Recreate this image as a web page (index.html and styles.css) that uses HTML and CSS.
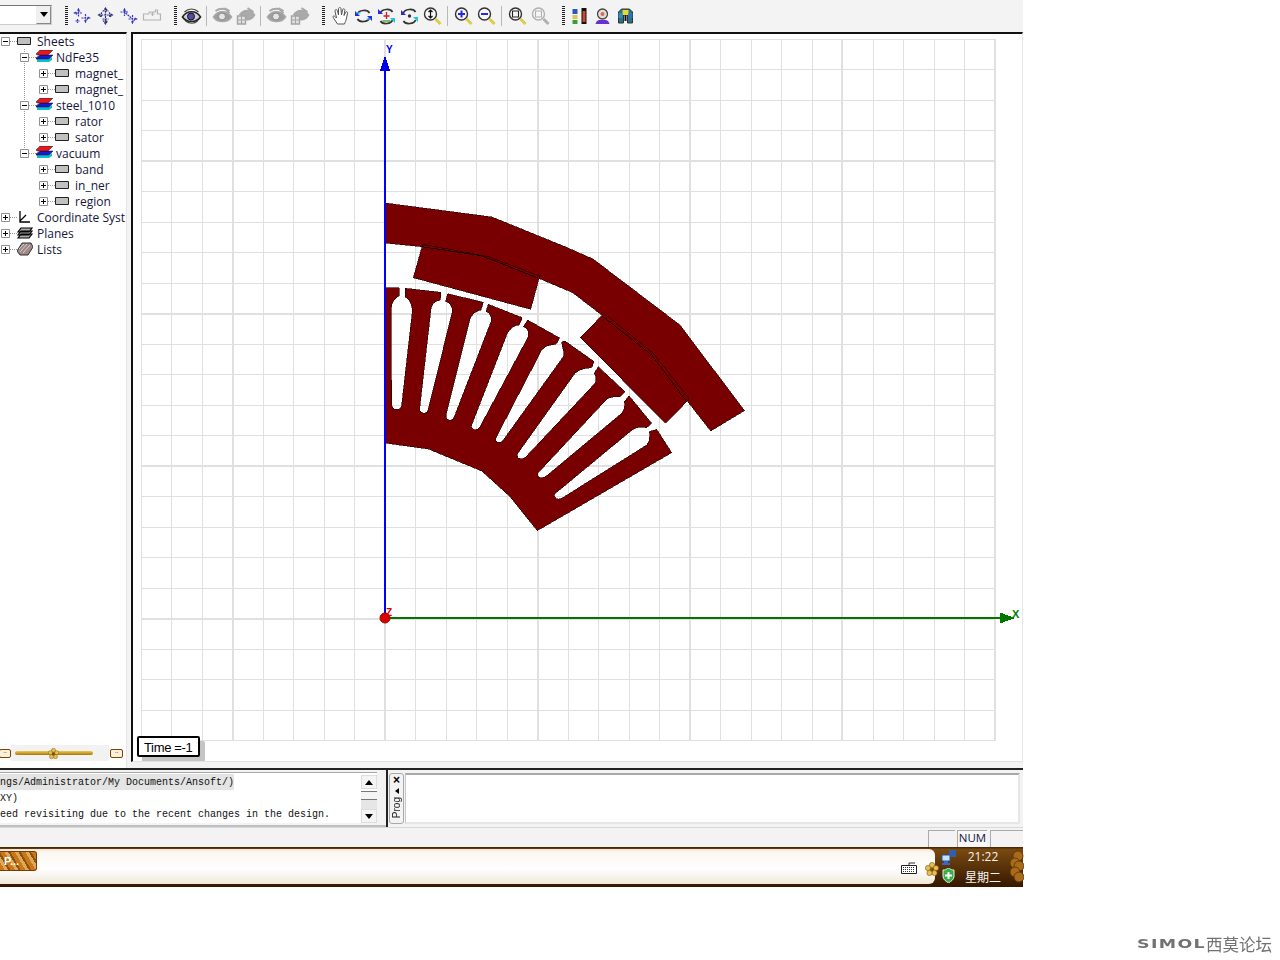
FILE: index.html
```html
<!DOCTYPE html>
<html lang="en">
<head>
<meta charset="utf-8">
<title>Maxwell</title>
<link rel="stylesheet" href="styles.css">
</head>
<body>
<svg class="defs" width="0" height="0" aria-hidden="true">
  <defs>
    <symbol id="sel1" viewBox="0 0 20 20"><path d="M6 3v8M2 7h8M13 8v8M9 12h8M5 13v4M3 15h4M6 3l-1 2h2zM2 7l2-1v2zM17 12l-2-1v2zM13 16l-1-2h2z" fill="none" stroke="#3434c8" stroke-width="1.2" stroke-dasharray="2 .7"/></symbol>
    <symbol id="sel2" viewBox="0 0 20 20"><path d="M10 2v16M3 9h14M7 5h6M7 13h6M10 2l-2 3h4zM10 18l-2-3h4zM3 9l3-2v4zM17 9l-3-2v4z" fill="none" stroke="#2c2c78" stroke-width="1.2" stroke-dasharray="2 .7"/></symbol>
    <symbol id="sel3" viewBox="0 0 20 20"><path d="M6 3v7M2 6h8M14 9v8M10 13h8M7 7l7 6M6 3l-1 2h2zM18 13l-2-1v2zM14 17l-1-2h2z" fill="none" stroke="#3434c8" stroke-width="1.2" stroke-dasharray="2 .7"/></symbol>
    <symbol id="sel4" viewBox="0 0 20 20"><path d="M2 8h5l1-2h6v-2h2v4h3v6H2zM11 6v4M9 8h4" fill="#f3f3f3" stroke="#b4b4b4" stroke-width="1.2"/></symbol>
    <symbol id="eye" viewBox="0 0 20 20"><path d="M1 11c4-7 14-7 18 0-4 6-14 6-18 0z" fill="#d0d0d0" stroke="#222" stroke-width="1.6"/><path d="M3 6c4-4 10-4 14 0M4 15c4 3 9 3 12 0" fill="none" stroke="#444" stroke-width="1.2"/><circle cx="9.5" cy="10.5" r="3.5" fill="#4e4ea8" stroke="#111"/></symbol>
    <symbol id="eyeg" viewBox="0 0 20 20"><path d="M1 11c4-7 14-7 18 0-4 6-14 6-18 0z" fill="#9c9c9c" stroke="#a8a8a8" stroke-width="1.6"/><path d="M3 5c4-3 10-3 14 0M12 2l5 5" fill="none" stroke="#a8a8a8" stroke-width="2"/><circle cx="9.5" cy="10.5" r="3.5" fill="#e4e4e4" stroke="#8c8c8c"/></symbol>
    <symbol id="eyeh" viewBox="0 0 20 20"><path d="M4 9c4-6 11-6 15 0-2 4-5 5-8 5" fill="#aaa" stroke="#a8a8a8" stroke-width="1.6"/><path d="M12 2l6 4" fill="none" stroke="#a8a8a8" stroke-width="2"/><path d="M2 10h8v8H2z" fill="#e0e0e0" stroke="#a4a4a4" stroke-width="1.4"/><path d="M2 14h8M6 10v8" stroke="#a4a4a4"/></symbol>
    <symbol id="hand" viewBox="0 0 20 20"><path d="M7 18 3 12c-1-2 0-3 2-1l1 1L4.500 5c0-2 2-2 2.500 0l1 4V3c0-2 2.500-2 2.500 0l.5 6 1-5c.5-2 2.500-1.500 2.300.5L13.500 9.500l1.500-3c1-1.500 2.500-.5 2 1L16 12c-.5 3-1.500 4-2 6z" fill="#fff" stroke="#555" stroke-width="1"/></symbol>
    <symbol id="rot1" viewBox="0 0 20 20"><path d="M4 8c1-4 10-5 12-1M16 12c-1 4-10 5-12 1" fill="none" stroke="#333" stroke-width="1.700"/><path d="M1.500 5v5h5z" fill="#2828e8"/><path d="M3 7h4" stroke="#18d8f0" stroke-width="1.200"/><path d="M18.500 15v-5h-5z" fill="#2828e8"/><path d="M13 13h4" stroke="#18d8f0" stroke-width="1.200"/></symbol>
    <symbol id="rot2" viewBox="0 0 20 20"><path d="M4 7c1-4 10-5 12-1M16 14c-1 4-10 5-12 1" fill="none" stroke="#333" stroke-width="1.700"/><path d="M1.500 3v5h5z" fill="#2828e8"/><path d="M18.500 17v-5h-5z" fill="#18c8e0"/><path d="M10 6v7M7 10h6" stroke="#e01818" stroke-width="1.300"/><path d="M6 15h8" stroke="#18a018" stroke-width="1.200"/></symbol>
    <symbol id="rot3" viewBox="0 0 20 20"><path d="M4 7c1-4 10-5 12-1M16 14c-1 4-10 5-12 1" fill="none" stroke="#333" stroke-width="1.700"/><path d="M1.500 4v5h5z" fill="#2828e8"/><path d="M18.500 16v-5h-5z" fill="#18c8e0"/><circle cx="10" cy="10" r="1.700" fill="#333"/></symbol>
    <symbol id="zfit" viewBox="0 0 20 20"><circle cx="8" cy="8" r="6" fill="#f6f6f6" stroke="#333" stroke-width="1.400"/><path d="M8 4v8M6 6l2-2 2 2M6 10l2 2 2-2" fill="none" stroke="#111" stroke-width="1.200"/><path d="M13 13l5 5" stroke="#d8d040" stroke-width="3"/></symbol>
    <symbol id="zin" viewBox="0 0 20 20"><circle cx="8" cy="8" r="6" fill="#f6f6f6" stroke="#333" stroke-width="1.400"/><path d="M8 4.500v7M4.500 8h7" stroke="#2828e8" stroke-width="2"/><path d="M13 13l5 5" stroke="#d8d040" stroke-width="3"/></symbol>
    <symbol id="zout" viewBox="0 0 20 20"><circle cx="8" cy="8" r="6" fill="#f6f6f6" stroke="#333" stroke-width="1.400"/><path d="M4.500 8h7" stroke="#2828e8" stroke-width="2"/><path d="M13 13l5 5" stroke="#d8d040" stroke-width="3"/></symbol>
    <symbol id="zbox" viewBox="0 0 20 20"><circle cx="8" cy="8" r="6" fill="#f6f6f6" stroke="#333" stroke-width="1.400"/><path d="M5 5h6v6H5z" fill="none" stroke="#222" stroke-width="1.100"/><path d="M13 13l5 5" stroke="#d8d040" stroke-width="3"/></symbol>
    <symbol id="zboxg" viewBox="0 0 20 20"><circle cx="8" cy="8" r="6" fill="#f6f6f6" stroke="#b0b0b0" stroke-width="1.400"/><path d="M5 5h6v6H5z" fill="none" stroke="#b0b0b0" stroke-width="1.100"/><path d="M13 13l5 5" stroke="#b0b0b0" stroke-width="3"/></symbol>
    <symbol id="tbars" viewBox="0 0 20 20"><path d="M12 2h5v16h-5z" fill="#111"/><path d="M13 5h3v11h-3z" fill="#c84830"/><path d="M3 3h5v5H3z" fill="#2858b8"/><path d="M3 9h5v4H3z" fill="#d8c850"/><path d="M3 14h5v4H3z" fill="#38a038"/></symbol>
    <symbol id="tuser" viewBox="0 0 20 20"><circle cx="10" cy="8" r="5" fill="#e8dcd8" stroke="#444" stroke-width="1.300"/><circle cx="10" cy="8" r="2" fill="#d07058"/><path d="M3 18c1-3 2-4 4-4h6c2 0 3 1 4 4z" fill="#6830d0"/></symbol>
    <symbol id="tcol" viewBox="0 0 20 20"><path d="M6 3h8l3 3v11h-5V9H8v8H3V6z" fill="#207880" stroke="#333"/><path d="M7 4h6v5H7z" fill="#e8d830"/><path d="M3 7h4v5H3z" fill="#3888c8"/><path d="M13 7h4v5h-4z" fill="#3070c0"/><path d="M9 9h2v6H9z" fill="#111"/></symbol>

    <symbol id="plus" viewBox="0 0 9 9"><path d="M.5.5h8v8h-8z" fill="#fff" stroke="#919191"/><path d="M2 4.500h5M4.500 2v5" stroke="#000"/></symbol>
    <symbol id="minus" viewBox="0 0 9 9"><path d="M.5.5h8v8h-8z" fill="#fff" stroke="#919191"/><path d="M2 4.500h5" stroke="#000"/></symbol>
    <symbol id="sheet" viewBox="0 0 14 8"><path d="M.5.5h13v7H.5z" fill="#c0c0c0" stroke="#222"/></symbol>
    <symbol id="stack" viewBox="0 0 17 12"><path d="M1 9h12l3-2v3l-3 2H1z" fill="#10c0c0"/><path d="M0 8l4-3h13l-4 4H0z" fill="#1818d8" stroke="#111" stroke-width=".5"/><path d="M0 4l4-4h13l-4 4-1 1H1z" fill="#e81818" stroke="#111" stroke-width=".5"/></symbol>
    <symbol id="axes" viewBox="0 0 14 14"><path d="M3 1v11h10M3 11l6-6" fill="none" stroke="#000" stroke-width="1.300"/></symbol>
    <symbol id="planes" viewBox="0 0 16 12"><path d="M4 1h11l-3 4H1zM4 4h11l-3 4H1zM4 7h11l-3 4H1z" fill="#aaa" stroke="#000" stroke-width="1.200"/></symbol>
    <symbol id="lists" viewBox="0 0 16 14"><path d="M5 1h9l2 4-5 8H3L0 9z" fill="#a08888" stroke="#333"/><path d="M3 10l7-8M6 11l7-8M2 7l5-5" stroke="#e0e0e0" stroke-width=".8"/></symbol>
    <symbol id="keyb" viewBox="0 0 18 14"><path d="M9 4V2h6" fill="none" stroke="#333"/><path d="M1.500 4.500h15v8h-15z" fill="#fff" stroke="#222"/><path d="M3 6.500h12M3 8.500h12M3 10.500h12" stroke="#333" stroke-dasharray="1 1"/></symbol>
    <symbol id="flower" viewBox="0 0 14 14"><g fill="#e8c050" stroke="#805010" stroke-width=".6"><circle cx="7" cy="3" r="2.600"/><circle cx="11" cy="6" r="2.600"/><circle cx="9.500" cy="11" r="2.600"/><circle cx="4.500" cy="11" r="2.600"/><circle cx="3" cy="6" r="2.600"/></g><circle cx="7" cy="7.500" r="2" fill="#805010"/></symbol>
    <symbol id="decoflower" viewBox="0 0 14 34" preserveAspectRatio="none"><g fill="#a86c18" stroke="#5a3008" stroke-width=".8"><circle cx="8" cy="6" r="5"/><circle cx="5" cy="13" r="5"/><circle cx="9" cy="16" r="5"/><circle cx="5" cy="22" r="5"/><circle cx="9" cy="27" r="5"/></g></symbol>
    <symbol id="net" viewBox="0 0 15 15"><path d="M8 0h7v7H8z" fill="#3060a8"/><path d="M1 5h8v6H1z" fill="#c8e0f8" stroke="#2850a0"/><path d="M3 11h4v2h2v2H1v-2h2z" fill="#3868c0"/></symbol>
    <symbol id="shield" viewBox="0 0 13 15"><path d="M1 2c4 0 4-2 5.500-2S8 2 12 2v6c0 4-3 5-5.500 7C4 13 1 12 1 8z" fill="#38b048" stroke="#e8f0e0"/><path d="M6.500 4v7M3 7.500h7" stroke="#fff" stroke-width="2"/></symbol>
  </defs>
</svg>

<div class="app">
  <header class="toolbar">
    <div class="combo"><span class="combo-btn"><i class="caret"></i></span></div>
    <i class="grip g1"></i>
    <svg class="tb"><use href="#sel1"/></svg>
    <svg class="tb"><use href="#sel2"/></svg>
    <svg class="tb"><use href="#sel3"/></svg>
    <svg class="tb"><use href="#sel4"/></svg>
    <i class="grip g2"></i>
    <svg class="tb"><use href="#eye"/></svg>
    <i class="sep"></i>
    <svg class="tb"><use href="#eyeg"/></svg>
    <svg class="tb"><use href="#eyeh"/></svg>
    <i class="sep"></i>
    <svg class="tb"><use href="#eyeg"/></svg>
    <svg class="tb"><use href="#eyeh"/></svg>
    <i class="grip g3"></i>
    <svg class="tb"><use href="#hand"/></svg>
    <svg class="tb"><use href="#rot1"/></svg>
    <svg class="tb"><use href="#rot2"/></svg>
    <svg class="tb"><use href="#rot3"/></svg>
    <svg class="tb"><use href="#zfit"/></svg>
    <i class="sep"></i>
    <svg class="tb"><use href="#zin"/></svg>
    <svg class="tb"><use href="#zout"/></svg>
    <i class="sep"></i>
    <svg class="tb"><use href="#zbox"/></svg>
    <svg class="tb"><use href="#zboxg"/></svg>
    <i class="grip g4"></i>
    <svg class="tb"><use href="#tbars"/></svg>
    <svg class="tb"><use href="#tuser"/></svg>
    <svg class="tb"><use href="#tcol"/></svg>
  </header>

  <main class="workspace">
    <aside class="tree-panel">
      <div class="tree">
        <div class="row l0"><svg class="box"><use href="#minus"/></svg><i class="stub"></i><svg class="ic ic-sheet"><use href="#sheet"/></svg><span>Sheets</span></div>
        <div class="guide">
          <div class="row l1"><svg class="box"><use href="#minus"/></svg><i class="stub"></i><svg class="ic ic-stack"><use href="#stack"/></svg><span>NdFe35</span></div>
          <div class="row l2"><svg class="box"><use href="#plus"/></svg><i class="stub"></i><svg class="ic ic-sheet"><use href="#sheet"/></svg><span>magnet_</span></div>
          <div class="row l2"><svg class="box"><use href="#plus"/></svg><i class="stub"></i><svg class="ic ic-sheet"><use href="#sheet"/></svg><span>magnet_</span></div>
          <div class="row l1"><svg class="box"><use href="#minus"/></svg><i class="stub"></i><svg class="ic ic-stack"><use href="#stack"/></svg><span>steel_1010</span></div>
          <div class="row l2"><svg class="box"><use href="#plus"/></svg><i class="stub"></i><svg class="ic ic-sheet"><use href="#sheet"/></svg><span>rator</span></div>
          <div class="row l2"><svg class="box"><use href="#plus"/></svg><i class="stub"></i><svg class="ic ic-sheet"><use href="#sheet"/></svg><span>sator</span></div>
        </div>
        <div class="row l1 last"><svg class="box"><use href="#minus"/></svg><i class="stub"></i><svg class="ic ic-stack"><use href="#stack"/></svg><span>vacuum</span></div>
        <div class="row l2"><svg class="box"><use href="#plus"/></svg><i class="stub"></i><svg class="ic ic-sheet"><use href="#sheet"/></svg><span>band</span></div>
        <div class="row l2"><svg class="box"><use href="#plus"/></svg><i class="stub"></i><svg class="ic ic-sheet"><use href="#sheet"/></svg><span>in_ner</span></div>
        <div class="row l2"><svg class="box"><use href="#plus"/></svg><i class="stub"></i><svg class="ic ic-sheet"><use href="#sheet"/></svg><span>region</span></div>
        <div class="row l0"><svg class="box"><use href="#plus"/></svg><i class="stub"></i><svg class="ic ic-axes"><use href="#axes"/></svg><span>Coordinate Syst</span></div>
        <div class="row l0"><svg class="box"><use href="#plus"/></svg><i class="stub"></i><svg class="ic ic-planes"><use href="#planes"/></svg><span>Planes</span></div>
        <div class="row l0"><svg class="box"><use href="#plus"/></svg><i class="stub"></i><svg class="ic ic-lists"><use href="#lists"/></svg><span>Lists</span></div>
      </div>
      <div class="slider">
        <span class="sl-btn sl-left">··</span>
        <div class="sl-area"><span class="sl-track"><svg class="sl-thumb"><use href="#flower"/></svg></span></div>
        <span class="sl-btn">··</span>
      </div>
    </aside>
    <section class="view">
      <svg class="model" viewBox="133 34 888 728" width="888" height="728">
        <path class="grid" d="M141.500 39V740M171.500 39V740M202.500 39V740M263.500 39V740M293.500 39V740M324.500 39V740M354.500 39V740M415.500 39V740M446.500 39V740M476.500 39V740M507.500 39V740M568.500 39V740M598.500 39V740M629.500 39V740M659.500 39V740M720.500 39V740M751.500 39V740M781.500 39V740M812.500 39V740M873.500 39V740M903.500 39V740M934.500 39V740M964.500 39V740M141 39.500H995M141 69.500H995M141 100.500H995M141 130.500H995M141 191.500H995M141 222.500H995M141 252.500H995M141 283.500H995M141 344.500H995M141 374.500H995M141 405.500H995M141 435.500H995M141 496.500H995M141 527.500H995M141 557.500H995M141 588.500H995M141 649.500H995M141 679.500H995M141 710.500H995M141 740.500H995"/>
        <path class="grid grid-b" d="M233 39V741M385 39V741M538 39V741M690 39V741M842 39V741M995 39V741M141 161H996M141 314H996M141 466H996M141 619H996"/>

        <path class="part" d="M385 203L492 217 565 246.700 593 259 680 325 744.500 410.700 710.700 431 688 402 653 354 601.700 315 572.700 292.700 538 278 481.700 255.700 421.700 246.700 385 243Z"/>
        <path class="part" d="M422.700 244.300L488.300 256.700 539.700 276 530.700 309.300 413.300 277.700Z"/>
        <path class="part" d="M604 313.300L653.300 353.300 689.300 399 665.700 423.300 580.300 337.700Z"/>
        <path class="wire" d="M421.700 246.700L481.700 255.700 538.300 278.300M601.700 315.700L651.700 355 686.700 401.700"/>
        <path class="part" d="M385 287.700H399.300V296C395 298 391 302 391 311.700L391.700 405C392 411 401 411 401.700 405L412.300 311.700C412.500 304 409 299 405 296.700L405.300 288.300
          L441 292.300L440.300 300C434 301 431 305 430.700 311.700L419.700 408.300C419 414 427 415 428.300 409.300L452.300 311.700C452.500 306 450 303 445.700 301.700L447.700 293.700
          L483.300 302.300L481 310C475 311 471 315 469.300 321.700L446 415C445 421 453 422 454.300 416.700L491 321.700C492 316 490 313 486 311.700L488.300 304.300
          L522.300 317.700L519.300 325C514 325 509 329 506.700 335L471.700 425C470 431 478 431 480 426.700L528.300 336.700C529 331 527 328 523.300 326.700L527.700 320
          L559.700 338L556 344.300C551 345 546 345 541.700 350L495.700 438.300C495 444 502 443 503.300 440L563.300 356.700C565 351 562 348 561.700 341.700L565 341
          L594.300 361.700L591.700 367.300C587 369 583 367 575 373.300L517.300 454C516 460 523 460 526 456.700L595 383.300C597 379 595 374 594.300 373.300L598.300 366.700
          L625 391.700L620 396.700C615 397 611 396 606 400L537.700 473.300C537 479 543 479 546.700 475.700L621.700 413.300C625 409 625 405 624.300 401.700L629 395.700
          L651.700 423.300L646.700 427.700C641 427 637 426 630 431.700L554.300 494.300C554 500 560 500 563.300 497.300L646.700 445C650 441 650 436 649.300 431.700L656.700 429.300
          L671.700 452.700L537.300 530.700L510 496.700L481.700 471L428.300 449L385 443Z"/>

        <path class="axis-b" d="M385 62V618"/>
        <path class="fill-b" d="M385 55L390 71H380Z"/>
        <path class="axis-g" d="M385 618H1002"/>
        <path class="fill-g" d="M1000 612.500L1015 618 1000 623.500Z"/>
        <circle class="origin" cx="385" cy="618" r="5"/>
        <text class="lbl lbl-y" x="386" y="53">Y</text>
        <text class="lbl lbl-z" x="386" y="616">Z</text>
        <text class="lbl lbl-x" x="1012" y="618">X</text>
      </svg>
      <div class="time">Time =-1</div>
    </section>
  </main>

  <section class="console">
    <div class="log">
      <div class="log-inner">
        <div class="line sel">ngs/Administrator/My Documents/Ansoft/)</div>
        <div class="line">XY)</div>
        <div class="line">eed revisiting due to the recent changes in the design.</div>
      </div>
      <div class="scroll">
        <span class="sb-btn"><i class="up"></i></span>
        <span class="sb-thumb"></span>
        <span class="sb-track"></span>
        <span class="sb-btn"><i class="down"></i></span>
      </div>
    </div>
    <div class="prog">
      <div class="prog-tab"><span class="x">×</span><i class="left"></i><span class="prog-label">Prog</span></div>
      <div class="prog-body"></div>
    </div>
  </section>

  <footer class="status">
    <span class="cell c1"></span>
    <span class="cell c2">NUM</span>
    <span class="cell c3"></span>
  </footer>

  <div class="taskbar">
    <div class="pill">
      <div class="start">P...</div>
      <svg class="keyb"><use href="#keyb"/></svg>
    </div>
    <div class="tray">
      <svg class="tray-flower"><use href="#flower"/></svg>
      <div class="tray-icons">
        <svg class="net"><use href="#net"/></svg>
        <svg class="shield"><use href="#shield"/></svg>
      </div>
      <div class="clock"><span>21:22</span><span>星期二</span></div>
      <svg class="deco"><use href="#decoflower"/></svg>
    </div>
  </div>
</div>

<div class="mark"><span class="mark-en">SIMOL</span><span class="mark-cn">西莫论坛</span></div>
</body>
</html>
```

FILE: styles.css
```css
* { box-sizing: border-box; }
html, body { margin: 0; padding: 0; background: #fff; }
body { width: 1280px; height: 960px; overflow: hidden; font-family: "Open Sans", "Liberation Sans", sans-serif; position: relative; }
i { display: block; font-style: normal; }
.defs { display: block; height: 0; }

.app { width: 1023px; height: 887px; display: flex; flex-direction: column; background: #f3f3f3; }

/* toolbar */
.toolbar { height: 32px; flex: none; display: flex; align-items: center; padding-bottom: 1px; }
.combo { width: 52px; height: 20px; background: #fff; border: 1px solid #777; border-right-color: #ccc; border-bottom-color: #ccc; border-left: 0; display: flex; justify-content: flex-end; margin-top: -2px; }
.combo-btn { width: 15px; height: 18px; background: #f0f0f0; border: 1px solid #888; border-top-color: #eee; border-left-color: #eee; display: flex; align-items: center; justify-content: center; }
.caret { border: 4px solid transparent; border-top: 5px solid #000; border-bottom: 0; }
.grip { width: 3px; height: 20px; background: repeating-linear-gradient(#222 0 1px, transparent 1px 2px); }
.g1 { margin: 0 3px 0 13px; }
.g2 { margin: 0 3px 0 11px; }
.g3 { margin: 0 4px 0 11px; }
.g4 { margin: 0 3px 0 10px; }
.tb { width: 23px; height: 20px; padding: 0 1px; flex: none; }
.sep { width: 1px; height: 20px; background: #b8b8b8; margin: 0 4px 0 3px; }

/* workspace */
.workspace { height: 736px; flex: none; display: flex; }
.tree-panel { width: 127px; flex: none; display: flex; flex-direction: column; background: #fff; border-top: 2px solid #111; border-right: 1px solid #e6e6e6; overflow: hidden; }
.tree { flex: 1; margin-top: -1px; font-size: 12px; color: #16163c; }
.row { height: 16px; display: flex; align-items: center; white-space: nowrap; }
.l0 { padding-left: 1px; }
.l1 { padding-left: 20px; }
.l2 { padding-left: 39px; }
.box { width: 9px; height: 9px; flex: none; position: relative; }
.stub { width: 7px; height: 1px; flex: none; background: repeating-linear-gradient(90deg, #999 0 1px, transparent 1px 2px); }
.ic { width: 17px; height: 14px; flex: none; margin-right: 3px; }
.ic-sheet { width: 14px; height: 8px; margin-right: 6px; }
.ic-stack { width: 17px; height: 12px; margin-top: -2px; }
.ic-axes { width: 14px; height: 14px; margin-right: 6px; margin-top: -1px; }
.ic-planes { width: 16px; height: 12px; margin-right: 4px; }
.ic-lists { width: 16px; height: 14px; margin-right: 4px; }
.guide { background: repeating-linear-gradient(#999 0 1px, transparent 1px 2px) 24px 0 / 1px 100% no-repeat; }
.last { background: repeating-linear-gradient(#999 0 1px, transparent 1px 2px) 24px 0 / 1px 8px no-repeat; }

.slider { height: 24px; flex: none; display: flex; align-items: center; margin-bottom: 3px; background: #fff; }
.sl-btn { width: 13px; height: 9px; flex: none; border: 1px solid #804000; border-radius: 2px; background: #fbf0d8; font-size: 7px; line-height: 6px; text-align: center; color: #333; }
.sl-left { width: 12px; margin-left: -1px; }
.sl-area { width: 98px; height: 16px; margin-right: 1px; padding: 0 15px 0 4px; background: #f2f2f2; display: flex; align-items: center; }
.sl-track { display: block; width: 78px; height: 4px; border-radius: 2px; background: linear-gradient(#f0c850, #a87808); position: relative; }
.sl-thumb { position: absolute; left: 33px; top: -3px; width: 11px; height: 11px; }

/* 3D view */
.view { width: 892px; margin-left: 4px; border-top: 2px solid #111; border-left: 2px solid #111; background: #fff; position: relative; height: 730px; border-right: 1px solid #e8e8e8; border-bottom: 1px solid #e2e2e2; overflow: hidden; }
.model { display: block; }
.grid { fill: none; stroke: #e0e0e0; stroke-width: 1; shape-rendering: crispEdges; }
.grid-b { stroke-width: 2; }
.part { fill: #780000; stroke: #1c0000; stroke-width: .6; stroke-linejoin: miter; shape-rendering: crispEdges; }
.wire { fill: none; stroke: #000; stroke-width: .8; shape-rendering: crispEdges; }
.axis-b { stroke: #0000ff; stroke-width: 2; fill: none; }
.fill-b { fill: #0000e8; shape-rendering: crispEdges; }
.axis-g { stroke: #007800; stroke-width: 2; fill: none; }
.fill-g { fill: #007800; shape-rendering: crispEdges; }
.origin { fill: #d80000; stroke: #a00000; stroke-width: 1; }
.lbl { font: bold 11px "Liberation Sans", sans-serif; }
.lbl-y { fill: #0000e0; font-size: 10px; }
.lbl-z { fill: #e00000; font-size: 10px; }
.lbl-x { fill: #008000; }

.time { position: absolute; left: 4px; top: 702px; width: 63px; height: 21px; background: #fff; border: 2px solid #000; border-radius: 2px; font: 13px/19px "Liberation Sans", sans-serif; letter-spacing: -.35px; padding-left: 5px; color: #000; box-shadow: 5px 5px 0 #c4c4c4; }

/* console */
.console { height: 59px; flex: none; display: flex; border-top: 2px solid #222; }
.log { width: 386px; flex: none; display: flex; padding-top: 2px; height: 57px; border-bottom: 2px solid #c0c0c0; }
.log-inner { width: 361px; flex: none; height: 51px; padding-top: 1px; background: #fff; border-top: 1px solid #a8a8a8; font: 10px/18px "Liberation Mono", monospace; color: #111; white-space: nowrap; overflow: hidden; }
.line { height: 16px; }
.sel { background: #e4e4e4; width: 234px; }
.scroll { width: 16px; flex: none; height: 51px; padding-top: 2px; border-top: 1px solid #a8a8a8; display: flex; flex-direction: column; background: #fff; }
.sb-btn { height: 14px; flex: none; background: #f4f4f4; border: 1px solid #ddd; display: flex; align-items: center; justify-content: center; }
.sb-thumb { height: 9px; flex: none; margin-top: 2px; background: #f4f4f4; border-top: 1px solid #777; border-bottom: 1px solid #777; }
.sb-track { flex: 1; background: #e6e6e6; }
.up { border: 4px solid transparent; border-bottom: 5px solid #000; border-top: 0; }
.down { border: 4px solid transparent; border-top: 5px solid #000; border-bottom: 0; }
.prog { flex: 1; display: flex; border-left: 2px solid #222; padding: 3px 3px 3px 1px; gap: 1px; }
.prog-tab { width: 15px; height: 51px; border: 1px solid #a8a8a8; border-radius: 3px; display: flex; flex-direction: column; align-items: center; background: #f3f3f3; }
.x { font: bold 12px/12px "Liberation Sans", sans-serif; color: #000; }
.left { border: 3px solid transparent; border-right: 4px solid #000; border-left: 0; margin: 2px 0 3px; }
.prog-label { writing-mode: vertical-rl; transform: rotate(180deg); font: 10px/12px "Liberation Sans", sans-serif; color: #222; }
.prog-body { flex: 1; height: 51px; background: #fff; border-top: 2px solid #a8a8a8; border-left: 1px solid #c8c8c8; border-right: 2px solid #e6e6e6; border-bottom: 2px solid #e6e6e6; }

/* status bar */
.status { height: 20px; flex: none; display: flex; justify-content: flex-end; align-items: flex-end; border-top: 1px solid #d8d8d8; gap: 3px; }
.cell { display: block; height: 17px; border-top: 1px solid #aaa; border-left: 1px solid #aaa; font: 11.5px/14px "Open Sans", sans-serif; color: #16163c; text-align: center; }
.c1 { width: 27px; margin-right: -1px; }
.c2 { width: 30px; background: #f8f8f8; }
.c3 { width: 33px; }

/* taskbar */
.taskbar { height: 40px; flex: none; display: flex; align-items: stretch; padding: 2px 0 3px; background: linear-gradient(#4a2808 0 1px, #7a4a10 2px, #351800); }
.pill { flex: 1; display: flex; align-items: center; border-radius: 0 6px 6px 0; background: linear-gradient(#efe4d4 0, #fbf7f0 3px, #fff 20px, #f0e8d8 100%); }
.start { width: 37px; height: 20px; margin-top: -11px; border: 1px solid #803808; border-left: 0; border-radius: 0 3px 3px 0; background: repeating-linear-gradient(60deg, #c87818 0 4px, #e0a858 4px 7px, #8a5410 7px 9px); color: #fff; font: bold 11px/18px "Liberation Sans", sans-serif; padding-left: 4px; }
.keyb { width: 18px; height: 14px; margin-left: auto; margin-right: 17px; margin-top: 3px; }
.tray { width: 88px; flex: none; display: flex; align-items: center; }
.tray-flower { width: 14px; height: 14px; margin-left: -10px; margin-top: 4px; flex: none; }
.tray-icons { display: flex; flex-direction: column; gap: 3px; margin-left: 1px; align-items: center; width: 16px; flex: none; }
.net { width: 15px; height: 15px; }
.shield { width: 13px; height: 15px; }
.clock { width: 38px; margin-left: 8px; margin-top: 2px; flex: none; display: flex; flex-direction: column; gap: 5px; align-items: center; font: 12px/16px "Open Sans", "Noto Sans CJK SC", sans-serif; color: #f4f4f4; }
.deco { width: 14px; height: 34px; margin-left: 8px; flex: none; }

/* watermark */
.mark { position: absolute; right: 8px; top: 936px; display: flex; align-items: center; gap: 2px; color: #727272; filter: blur(.45px); }
.mark-en { font: bold 13px/16px "DejaVu Sans", sans-serif; letter-spacing: 1px; width: 67px; white-space: nowrap; transform: scaleX(1.34); transform-origin: left center; }
.mark-cn { font: 16.5px/16px "Noto Sans CJK SC", sans-serif; width: 66px; white-space: nowrap; }
```
